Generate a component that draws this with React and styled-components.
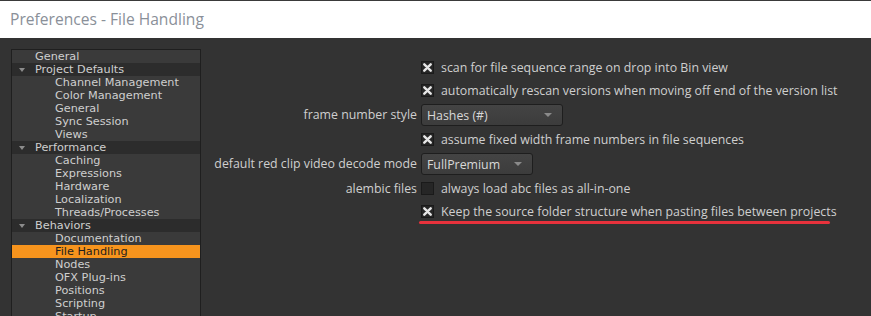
import React from "react";
import styled, { createGlobalStyle } from "styled-components";

const Global = createGlobalStyle`
  html, body { margin: 0; padding: 0; background: #333333; }
  body { width: 871px; height: 316px; overflow: hidden; }
`;

const Window = styled.div`
  width: 871px;
  height: 316px;
  display: flex;
  flex-direction: column;
  background: #333333;
  overflow: hidden;
`;

const TitleBar = styled.div`
  height: 38px;
  flex: none;
  background: #ffffff;
  border-top: 1px solid #3a3a3a;
  display: flex;
  align-items: center;
  padding-left: 10px;
  font-family: "Open Sans", "Noto Sans", sans-serif;
  font-size: 15.6px;
  color: #8a9099;
  padding-bottom: 2px;
  box-sizing: border-box;
`;

const Body = styled.div`
  flex: 1;
  display: flex;
  align-items: flex-start;
  padding: 11px 0 0 11px;
  min-height: 0;
`;

const Tree = styled.div`
  width: 188px;
  flex: none;
  border: 1px solid #1f1f1f;
  border-bottom: none;
  background: #3a3a3a;
  display: flex;
  flex-direction: column;
  font-family: "DejaVu Sans", Verdana, sans-serif;
  font-size: 11.25px;
  color: #cfcfcf;
`;

const TreeRow = styled.div`
  height: 13px;
  line-height: 13px;
  display: flex;
  align-items: center;
  padding-left: ${(p) => (p.$child ? 43 : 23)}px;
  position: relative;
  white-space: nowrap;
  background: ${(p) => (p.$selected ? "#f7941d" : p.$header ? "#2c2c2c" : "transparent")};
  color: ${(p) => (p.$selected ? "#1e1e1e" : "#cfcfcf")};
`;

const Caret = styled.span`
  position: absolute;
  left: 7px;
  top: 5px;
  width: 0;
  height: 0;
  border-left: 3.5px solid transparent;
  border-right: 3.5px solid transparent;
  border-top: 4px solid #8c8c8c;
`;

const Form = styled.div`
  flex: 1;
  display: grid;
  grid-template-columns: 206px 1fr;
  column-gap: 4px;
  row-gap: 2px;
  margin-left: 10px;
  margin-top: 8px;
  font-family: "Open Sans", "Noto Sans", sans-serif;
  font-size: 12.35px;
  color: #cfcfcf;
  align-items: center;
`;

const Label = styled.div`
  text-align: right;
  white-space: nowrap;
  height: ${(p) => (p.$tall ? 24 : 21)}px;
  line-height: ${(p) => (p.$tall ? 24 : 21)}px;
`;

const Control = styled.div`
  display: flex;
  align-items: center;
  height: ${(p) => (p.$tall ? 24 : 21)}px;
  white-space: nowrap;
  position: relative;
`;

const Box = styled.span`
  width: 13px;
  height: 13px;
  box-sizing: border-box;
  background: #262626;
  border: 1px solid #1a1a1a;
  display: inline-flex;
  align-items: center;
  justify-content: center;
  margin-right: 7px;
  flex: none;
`;

const Select = styled.div`
  box-sizing: border-box;
  width: ${(p) => p.$w}px;
  height: 22px;
  border: 1px solid #1e1e1e;
  border-radius: 3px;
  background: linear-gradient(#444444, #3c3c3c);
  display: flex;
  align-items: center;
  padding-left: 5px;
  color: #d8d8d8;
  position: relative;
`;

const Arrow = styled.span`
  position: absolute;
  right: 10px;
  top: 8px;
  width: 0;
  height: 0;
  border-left: 4px solid transparent;
  border-right: 4px solid transparent;
  border-top: 4px solid #8a8a8a;
`;

const Underline = styled.span`
  position: absolute;
  left: -2px;
  top: 20px;
  width: 411px;
  height: 3px;
  border-radius: 2px;
  background: #e8323c;
`;

const Check = ({ on }) => (
  <Box>
    {on && (
      <svg width="9" height="9" viewBox="0 0 9 9">
        <path d="M1.3 1.3 L7.7 7.7 M7.7 1.3 L1.3 7.7" stroke="#e6e6e6" strokeWidth="2.4" strokeLinecap="round" />
      </svg>
    )}
  </Box>
);

const tree = [
  { t: "General" },
  { t: "Project Defaults", h: true },
  { t: "Channel Management", c: true },
  { t: "Color Management", c: true },
  { t: "General", c: true },
  { t: "Sync Session", c: true },
  { t: "Views", c: true },
  { t: "Performance", h: true },
  { t: "Caching", c: true },
  { t: "Expressions", c: true },
  { t: "Hardware", c: true },
  { t: "Localization", c: true },
  { t: "Threads/Processes", c: true },
  { t: "Behaviors", h: true },
  { t: "Documentation", c: true },
  { t: "File Handling", c: true, s: true },
  { t: "Nodes", c: true },
  { t: "OFX Plug-ins", c: true },
  { t: "Positions", c: true },
  { t: "Scripting", c: true },
  { t: "Startup", c: true },
];

export default function App() {
  return (
    <Window>
      <Global />
      <TitleBar>Preferences - File Handling</TitleBar>
      <Body>
        <Tree>
          {tree.map((r, i) => (
            <TreeRow key={i} $child={r.c} $header={r.h} $selected={r.s}>
              {r.h && <Caret />}
              {r.t}
            </TreeRow>
          ))}
        </Tree>
        <Form>
          <Label />
          <Control><Check on />scan for file sequence range on drop into Bin view</Control>
          <Label />
          <Control><Check on />automatically rescan versions when moving off end of the version list</Control>
          <Label $tall>frame number style</Label>
          <Control $tall><Select $w={142}>Hashes (#)<Arrow /></Select></Control>
          <Label />
          <Control><Check on />assume fixed width frame numbers in file sequences</Control>
          <Label $tall>default red clip video decode mode</Label>
          <Control $tall><Select $w={112}>FullPremium<Arrow /></Select></Control>
          <Label>alembic files</Label>
          <Control><Check />always load abc files as all-in-one</Control>
          <Label />
          <Control><Check on />Keep the source folder structure when pasting files between projects<Underline /></Control>
        </Form>
      </Body>
    </Window>
  );
}
